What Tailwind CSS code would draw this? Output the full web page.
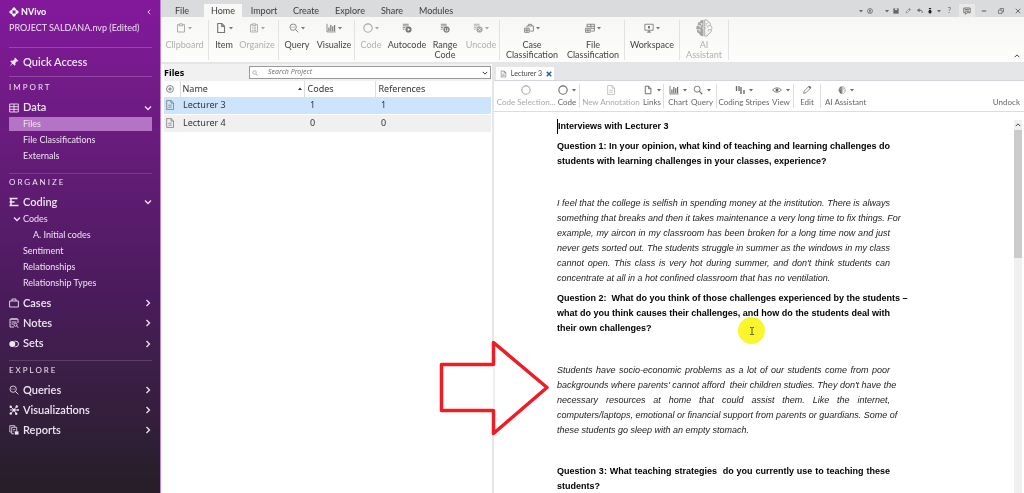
<!DOCTYPE html>
<html lang="en">
<head>
  <meta charset="UTF-8">
  <meta name="viewport" content="width=device-width, initial-scale=1.0">
  <title>NVivo - PROJECT SALDANA.nvp</title>
  <script src="https://cdn.jsdelivr.net/npm/@tailwindcss/browser@4"></script>
</head>
<body class="relative flex h-screen overflow-hidden bg-white font-['Lato',sans-serif] text-[#3c3c3c]">

  <!-- Icon sprite -->
  <svg class="hidden">
    <symbol id="i-right" viewBox="0 0 8 8"><path d="M2.5 1 5.5 4 2.5 7" fill="none" stroke="currentColor" stroke-width="1.3"/></symbol>
    <symbol id="i-down" viewBox="0 0 8 8"><path d="M1 2.5 4 5.5 7 2.5" fill="none" stroke="currentColor" stroke-width="1.3"/></symbol>
    <symbol id="i-caret" viewBox="0 0 4 4"><path d="M0 1h4L2 3.4z" fill="currentColor"/></symbol>
    <symbol id="i-circle" viewBox="0 0 12 12"><circle cx="6" cy="6" r="5" fill="none" stroke="currentColor" stroke-width="1.3"/></symbol>
    <symbol id="i-page" viewBox="0 0 12 12"><path d="M2.7 1.5h4.2l2.6 2.7v6.3H2.7zM6.7 1.5v2.9h2.8" fill="none" stroke="currentColor" stroke-width="1.1"/></symbol>
    <symbol id="i-doc" viewBox="0 0 12 12"><path d="M2 .7h5.400l2.800 2.800v7.800H2zM7.200.7v3h3M4 6.200h4M4 8.600h4" fill="none" stroke="currentColor" stroke-width=".8"/></symbol>
    <symbol id="i-search" viewBox="0 0 12 12"><circle cx="5" cy="5" r="3.6" fill="none" stroke="currentColor"/><path d="m7.7 7.7 3.4 3.4" stroke="currentColor" stroke-width="1.3"/></symbol>
    <symbol id="i-query" viewBox="0 0 12 12"><circle cx="5" cy="5" r="3.8" fill="none" stroke="currentColor"/><path d="m7.8 7.8 3.4 3.4M3 5h.8m.8 0h.8m.8 0H7" stroke="currentColor" stroke-width="1.1"/></symbol>
    <symbol id="i-chart" viewBox="0 0 12 12"><path d="M1.2 1v9.7H11.5" fill="none" stroke="currentColor"/><path d="M3.5 5.5v4M5.8 2.5v7M8.1 4v5.5M10.3 2.5v7" stroke="currentColor" stroke-width="1.4"/></symbol>
    <symbol id="i-clip" viewBox="0 0 12 12"><path d="M4 2H1.8v8.800h8.400V2H8M4 1h4v2.400H4z" fill="none" stroke="currentColor" stroke-width="1.1"/></symbol>
    <symbol id="i-list" viewBox="0 0 12 12"><path d="M4 2H1.8v8.800h8.400V2H8M4 1h4v2H4zM3.5 5h1M5.5 5h3M3.5 7h1M5.5 7h3M3.5 9h1M5.5 9h3" fill="none" stroke="currentColor"/></symbol>
    <symbol id="i-lines" viewBox="0 0 12 12"><path d="M1 1.5h7M1 3.5h7M1 5.5h3M1 7.5h2" stroke="currentColor"/><circle cx="7.8" cy="7.8" r="3.7" fill="currentColor"/></symbol>
    <symbol id="i-auto" viewBox="0 0 12 12"><use href="#i-lines"/><path d="m6.8 6 3 1.8-3 1.8z" fill="#fff"/></symbol>
    <symbol id="i-range" viewBox="0 0 12 12"><use href="#i-lines"/><path d="M6.5 6v3.5h2.8V6" fill="none" stroke="#fff" stroke-width=".9"/></symbol>
    <symbol id="i-uncode" viewBox="0 0 12 12"><use href="#i-lines"/><path d="m6.3 6.3 3 3m0-3-3 3" stroke="#fff" stroke-width=".9"/></symbol>
    <symbol id="i-caseclass" viewBox="0 0 12 12"><path d="M3.5 5V3.5h7.800v6.200H7.500M5.500 3.500V1.600h3.600v1.900" fill="none" stroke="currentColor"/><path d="M.7 6.200h5.600v5H.7zM.7 8.700h5.600M3.500 6.200v5" fill="none" stroke="currentColor"/></symbol>
    <symbol id="i-fileclass" viewBox="0 0 12 12"><path d="M2.500 5V1.500h8.800v8.200H7.500M2.500 4h8.800M7 1.500v4.200M7 6.500h4.300" fill="none" stroke="currentColor"/><path d="M.7 6.200h5.600v5H.7zM.7 8.700h5.600M3.500 6.200v5" fill="none" stroke="currentColor"/></symbol>
    <symbol id="i-screen" viewBox="0 0 12 12"><path d="M1 1.500h10v7.200H1zM3.500 11h5" fill="none" stroke="currentColor"/><path d="M4.800 3.600h2.400v3H4.800zM5.200 8.700h1.600V11H5.200z" fill="currentColor"/></symbol>
    <symbol id="i-pencil" viewBox="0 0 12 12"><path d="m2 10 .7-2.800L8.400 1.500l2.100 2.100-5.700 5.700z" fill="none" stroke="currentColor" stroke-width=".9"/><path d="m7.600 2.200 1.400-1.400 2.200 2.200-1.400 1.400z" fill="currentColor"/></symbol>
    <symbol id="i-brain" viewBox="0 0 18 18"><path d="M8.5 1C6.5.5 5 1.600 5 3 3 3 2.300 5 3 6.300 1 7 .7 9.500 2 10.800c-.5 2 .6 3.500 2.300 3.700C4.800 16.800 7 17.600 8.500 17z" fill="currentColor"/><path d="M9.700 1c2-.5 3.400.6 3.400 2 2 0 2.700 2 2 3.300 2 .7 2.300 3.200 1 4.500.5 2-.6 3.500-2.300 3.700-.4 2.300-2.600 3.100-4.100 2.500z" fill="none" stroke="currentColor" stroke-width=".9"/><path d="M12.500 4.500h-1.300v2.200M15 6.700h-2.200v2M16 10.700h-2.800v2M9.700 9h1.500" fill="none" stroke="currentColor" stroke-width=".7"/><path d="M5.500 4.500h1.300v2.200M3 6.700h2.200v2M2.500 10.700h2.500v2M8.500 9H7" fill="none" stroke="#fff" stroke-width=".8"/></symbol>
  </svg>

  <!-- Navigation -->
  <nav class="flex w-[161px] shrink-0 flex-col border-r border-[#c184cf] bg-linear-to-b from-[#84189c] via-[#4a1b5b] via-60% to-[#251e28] pr-2 pl-[9px] text-[#efe4f2]">
    <div class="flex h-5 items-center gap-0.5 pt-1">
      <svg class="size-2.5" viewBox="0 0 10 10"><path d="M5 0 10 5 5 10 0 5z" fill="#fff"/><path d="M5 3 7 5 5 7 3 5z" fill="#7d1994"/><path d="M1.500 1.500l2 2m3 3 2 2m0-7-2 2m-3 3-2 2" stroke="#7d1994" stroke-width=".7"/></svg>
      <span class="flex-1 text-[9px] font-bold text-white">NVivo</span>
      <button aria-label="Collapse" class="rotate-180"><svg class="size-1.5"><use href="#i-right"/></svg></button>
    </div>
    <div class="h-[27px] text-[9px] leading-4 whitespace-nowrap">PROJECT SALDANA.nvp (Edited)</div>
    <a href="#" class="flex h-[30px] items-center gap-1 border-y border-white/20 text-[11px] font-semibold">
      <svg class="size-2.5" viewBox="0 0 10 10"><path d="M6 .5 9.500 4 8.400 4.500 8 4.300 6.300 6l.2 1.800-.9.9-2-2L.3 9.800 3 6 1.200 4.300l.9-.8 1.900.2L5.700 2l-.3-.5z" fill="currentColor"/></svg>
      Quick Access
    </a>

    <h2 class="h-[21px] text-[8px] leading-5 tracking-[2px]">IMPORT</h2>
    <a href="#" class="flex h-[19px] items-center gap-1 text-[11px] font-semibold">
      <svg class="size-2.5" viewBox="0 0 10 10"><path d="M.7 1h8.600v8H.7zM.7 3.700h8.600M.7 6.300h8.600M5 1v8" fill="none" stroke="currentColor" stroke-width=".9"/></svg>
      <span class="flex-1">Data</span><svg class="size-2"><use href="#i-down"/></svg>
    </a>
    <a href="#" class="h-[14px] bg-[#b473c4] pl-3.5 text-[9px] leading-[14px]">Files</a>
    <a href="#" class="mt-px h-4 pl-3.5 text-[9px] leading-4">File Classifications</a>
    <a href="#" class="h-[26px] border-b border-white/15 pl-3.5 text-[9px] leading-4">Externals</a>

    <h2 class="h-[19px] text-[8px] leading-4 tracking-[2px]">ORGANIZE</h2>
    <a href="#" class="flex h-[18px] items-center gap-1 text-[11px] font-semibold">
      <svg class="size-2.5" viewBox="0 0 10 10"><path d="M.5 1.500h8M.5 5h5M.5 8.500h9M2 1.500v7" stroke="currentColor" stroke-width="1.600"/></svg>
      <span class="flex-1">Coding</span><svg class="size-2"><use href="#i-down"/></svg>
    </a>
    <a href="#" class="flex h-4 items-center gap-0.5 pl-1 text-[9px] leading-4"><svg class="size-2"><use href="#i-down"/></svg>Codes</a>
    <a href="#" class="h-4 pl-6 text-[9px] leading-4">A. Initial codes</a>
    <a href="#" class="h-4 pl-3.5 text-[9px] leading-4">Sentiment</a>
    <a href="#" class="h-4 pl-3.5 text-[9px] leading-4">Relationships</a>
    <a href="#" class="mb-0.5 h-4 pl-3.5 text-[9px] leading-4">Relationship Types</a>
    <a href="#" class="flex h-5 items-center gap-1 text-[11px] font-semibold">
      <svg class="size-2.5" viewBox="0 0 10 10"><path d="M.6 3h8.800v6H.6zM3 3V1h4v2" fill="none" stroke="currentColor" stroke-width=".9"/></svg>
      <span class="flex-1">Cases</span><svg class="size-2"><use href="#i-right"/></svg>
    </a>
    <a href="#" class="flex h-5 items-center gap-1 text-[11px] font-semibold">
      <svg class="size-2.5" viewBox="0 0 10 10"><path d="M5 9H1V1h8v4M3 0v2M5 0v2M7 0v2M2.500 4h5M2.500 6h2M7.500 8l2 1.700" fill="none" stroke="currentColor" stroke-width=".9"/><circle cx="6.500" cy="6.800" r="1.500" fill="none" stroke="currentColor" stroke-width=".8"/></svg>
      <span class="flex-1">Notes</span><svg class="size-2"><use href="#i-right"/></svg>
    </a>
    <a href="#" class="flex h-[21px] items-center gap-1 text-[11px] font-semibold">
      <svg class="size-2.5" viewBox="0 0 10 10"><circle cx="3.300" cy="5" r="3" fill="currentColor"/><path d="M5.500 2.200h1.200a2.800 2.800 0 0 1 0 5.600H5.500" fill="none" stroke="currentColor"/></svg>
      <span class="flex-1">Sets</span><svg class="size-2"><use href="#i-right"/></svg>
    </a>

    <h2 class="mt-1.5 h-5 border-t border-white/15 text-[8px] leading-[18px] tracking-[2px]">EXPLORE</h2>
    <a href="#" class="flex h-5 items-center gap-1 text-[11px] font-semibold">
      <svg class="size-2.5"><use href="#i-query"/></svg>
      <span class="flex-1">Queries</span><svg class="size-2"><use href="#i-right"/></svg>
    </a>
    <a href="#" class="flex h-5 items-center gap-1 text-[11px] font-semibold">
      <svg class="size-2.5" viewBox="0 0 10 10"><path d="M5 5 1.500 1.500M5 5l3-4M5 5l3.500 0M5 5 2 8.500M5 5l2 3.500M5 5H1" stroke="currentColor" stroke-width=".9"/><g fill="currentColor"><circle cx="5" cy="5" r="1.500"/><circle cx="1.700" cy="1.700" r="1.200"/><circle cx="7.800" cy="1.500" r="1.200"/><circle cx="9" cy="5" r="1"/><circle cx="1.800" cy="8.500" r="1.200"/><circle cx="7.200" cy="8.700" r="1.200"/></g></svg>
      <span class="flex-1">Visualizations</span><svg class="size-2"><use href="#i-right"/></svg>
    </a>
    <a href="#" class="flex h-5 items-center gap-1 text-[11px] font-semibold">
      <svg class="size-2.5" viewBox="0 0 10 10"><path d="M2.500 7H.8V.7h5V2M2.700 2.300h5v4M2.700 2.300v6.500H5M4.200 4.500h2M4.200 6h1" fill="none" stroke="currentColor" stroke-width=".8"/><path d="M5.800 6.300h3.700v3.300H5.800z" fill="currentColor"/></svg>
      <span class="flex-1">Reports</span><svg class="size-2"><use href="#i-right"/></svg>
    </a>
  </nav>

  <div class="flex min-w-0 flex-1 flex-col">
    <!-- Title bar and tabs -->
    <header class="flex h-[17px] shrink-0 items-end bg-[#d9dbdd] text-[9px] leading-[13px]">
      <button class="mr-[7px] w-9 pl-1.5">File</button>
      <button class="h-[13px] w-[38px] bg-[#f8f8f7]">Home</button>
      <button class="w-11">Import</button>
      <button class="w-10">Create</button>
      <button class="w-12">Explore</button>
      <button class="w-9">Share</button>
      <button class="w-[52px]">Modules</button>
      <div class="ml-auto flex h-full items-center pt-1 text-[#666]">
        <svg class="mr-1 size-1"><use href="#i-caret"/></svg>
        <button aria-label="Account" class="mr-3"><svg class="size-1.5" viewBox="0 0 8 8"><circle cx="4" cy="4" r="3.300" fill="none" stroke="currentColor"/><circle cx="4" cy="3.300" r="1.200" fill="currentColor"/><path d="M2 6.300c1-1.500 3-1.500 4 0" fill="none" stroke="currentColor"/></svg></button>
        <svg class="mr-1 size-1"><use href="#i-caret"/></svg>
        <button aria-label="Save" class="mr-1.5"><svg class="size-1.5" viewBox="0 0 8 8"><path d="M.5.5h7v7h-7z" fill="currentColor"/><path d="M2.500.5h3v2.300h-3z" fill="#d9dbdd"/></svg></button>
        <button aria-label="Edit" class="mr-1.5"><svg class="size-1.5"><use href="#i-pencil"/></svg></button>
        <button aria-label="Undo" class="mr-1"><svg class="size-1.5" viewBox="0 0 8 8"><path d="M1 3h4.500Q7.300 4 7 6.500" fill="none" stroke="currentColor" stroke-width="1.300"/><path d="M3.500.3v5.400L0 3z" fill="currentColor"/></svg></button>
        <button aria-label="More" class="mr-1 text-[#222]"><svg class="size-1.5" viewBox="0 0 8 8"><path d="M2.500 0h3v1.500h-3zM2.500 2.500h3v2h1.500L4 8 1 4.500h1.500z" fill="currentColor"/></svg></button>
        <svg class="mr-1.5 size-1"><use href="#i-caret"/></svg>
        <button class="mr-2 text-[8px]">?</button>
        <button aria-label="Feedback" class="mr-1.5 flex h-[13px] w-4 items-center justify-center bg-[#e8e8e7]"><svg class="size-2" viewBox="0 0 8 8"><path d="M.8 1h6.400v4.700H4L2.500 7.300V5.700H.8zM2 2.600h4M2 4.200h4" fill="none" stroke="currentColor" stroke-width=".9"/></svg></button>
        <button aria-label="Minimize" class="mr-[11px]"><svg class="size-1.5" viewBox="0 0 8 8"><path d="M1 4h6" stroke="currentColor" stroke-width="1.500"/></svg></button>
        <button aria-label="Restore" class="mr-[11px]"><svg class="size-1.5" viewBox="0 0 8 8"><path d="M.7 2.700h4.600v4.600H.7zM2.700 2.500V.7h4.600v4.600H5.500" fill="none" stroke="currentColor"/></svg></button>
        <button aria-label="Close" class="mr-[3px]"><svg class="size-1.5" viewBox="0 0 8 8"><path d="m1 1 6 6m0-6L1 7" stroke="currentColor" stroke-width="1.300"/></svg></button>
      </div>
    </header>

    <!-- Ribbon -->
    <div class="flex h-[45px] shrink-0 bg-linear-to-b from-[#f7f7f6] to-[#fdfdfc] pt-[3px] pb-0.5 text-[9px] leading-[10px] text-[#444] [&_button]:flex [&_button]:flex-col [&_button]:items-center [&_button]:gap-1 [&_button>span:first-child]:flex [&_button>span:first-child]:h-4 [&_button>span:first-child]:items-center [&_button>span:first-child]:gap-0.5 [&_button>span:first-child]:text-[#777] [&_button:disabled]:text-[#b0b0b0] [&_button:disabled>span:first-child]:text-[#a5a5a5]">
      <div class="flex w-12 justify-center border-r border-[#e2e2e4]">
        <button disabled><span><svg class="size-2.5"><use href="#i-clip"/></svg><svg class="size-1"><use href="#i-caret"/></svg></span>Clipboard</button>
      </div>
      <div class="flex w-[70px] border-r border-[#e2e2e4]">
        <button class="w-[30px]"><span><svg class="size-3"><use href="#i-page"/></svg><svg class="size-1"><use href="#i-caret"/></svg></span>Item</button>
        <button class="w-9" disabled><span><svg class="size-2.5"><use href="#i-list"/></svg><svg class="size-1"><use href="#i-caret"/></svg></span>Organize</button>
      </div>
      <div class="flex w-[76px] border-r border-[#e2e2e4]">
        <button class="w-9"><span><svg class="size-2.5"><use href="#i-query"/></svg><svg class="size-1"><use href="#i-caret"/></svg></span>Query</button>
        <button class="w-[38px]"><span><svg class="size-2.5"><use href="#i-chart"/></svg><svg class="size-1"><use href="#i-caret"/></svg></span>Visualize</button>
      </div>
      <div class="flex w-[145px] border-r border-[#e2e2e4]">
        <button class="w-8" disabled><span><svg class="size-2.5"><use href="#i-circle"/></svg><svg class="size-1"><use href="#i-caret"/></svg></span>Code</button>
        <button class="w-10"><span><svg class="size-2.5"><use href="#i-auto"/></svg></span>Autocode</button>
        <button class="w-9"><span><svg class="size-2.5"><use href="#i-range"/></svg></span><span>Range<br>Code</span></button>
        <button class="w-9" disabled><span><svg class="size-2.5"><use href="#i-uncode"/></svg><svg class="size-1"><use href="#i-caret"/></svg></span>Uncode</button>
      </div>
      <div class="flex w-[125px] border-r border-[#e2e2e4]">
        <button class="w-16"><span><svg class="size-2.5"><use href="#i-caseclass"/></svg><svg class="size-1"><use href="#i-caret"/></svg></span><span>Case<br>Classification</span></button>
        <button class="w-[58px]"><span><svg class="size-2.5"><use href="#i-fileclass"/></svg><svg class="size-1"><use href="#i-caret"/></svg></span><span>File<br>Classification</span></button>
      </div>
      <div class="flex w-[55px] justify-center border-r border-[#e2e2e4]">
        <button><span><svg class="size-2.5"><use href="#i-screen"/></svg><svg class="size-1"><use href="#i-caret"/></svg></span>Workspace</button>
      </div>
      <div class="flex w-[49px] justify-center border-r border-[#e2e2e4]">
        <button disabled><span><svg class="size-[18px]"><use href="#i-brain"/></svg></span><span>AI<br>Assistant</span></button>
      </div>
      <button aria-label="Collapse ribbon" class="mr-1 ml-auto justify-end pb-px"><svg class="size-1.5 rotate-180"><use href="#i-down"/></svg></button>
    </div>

    <main class="flex min-h-0 flex-1 border-t-2 border-[#e4e5e8]">
      <!-- File list -->
      <section class="w-[331px] shrink-0 pr-px pl-[3px] font-['Noto_Sans',sans-serif] text-[9px]">
        <div class="flex h-[17px] items-center bg-[#f1f1f1]">
          <h1 class="w-[85px] font-bold text-black">Files</h1>
          <label class="flex h-[13px] flex-1 items-center border border-[#999] bg-white px-0.5 text-[#777]">
            <svg class="mr-2.5 size-1.5"><use href="#i-search"/></svg>
            <input type="text" aria-label="Search Project" placeholder="Search Project" class="min-w-0 flex-1 text-[7px] italic outline-none placeholder:text-[#777]">
            <svg class="size-1.5 text-[#333]"><use href="#i-down"/></svg>
          </label>
        </div>
        <table class="w-full table-fixed text-left leading-3 text-[#333]">
          <thead>
            <tr class="h-4">
              <th class="w-4 pl-0.5"><svg class="size-2" viewBox="0 0 10 10"><circle cx="5" cy="5" r="4.300" fill="none" stroke="#555" stroke-width=".9"/><path d="M5 2.800v4.400M2.800 5h4.400" stroke="#555"/></svg></th>
              <th class="w-[124px] border-l border-[#ddd] pl-0.5 font-normal"><div class="flex items-center justify-between pr-0.5">Name<svg class="size-1 rotate-180"><use href="#i-caret"/></svg></div></th>
              <th class="w-[71px] border-l border-[#ddd] pl-[3px] font-normal">Codes</th>
              <th class="border-l border-[#ddd] pl-[3px] font-normal">References</th>
            </tr>
          </thead>
          <tbody>
            <tr class="h-[17px] bg-[#cde5fc]">
              <td class="pl-px"><svg class="size-2.5 text-[#666]"><use href="#i-doc"/></svg></td>
              <td class="pl-[3px]">Lecturer 3</td><td class="pl-1.5">1</td><td class="pl-1.5">1</td>
            </tr>
            <tr class="h-[18px] border-t border-white bg-[#f0f0f0]">
              <td class="pl-px"><svg class="size-2.5 text-[#666]"><use href="#i-doc"/></svg></td>
              <td class="pl-[3px]">Lecturer 4</td><td class="pl-1.5">0</td><td class="pl-1.5">0</td>
            </tr>
          </tbody>
        </table>
      </section>

      <!-- Document -->
      <section class="flex min-w-0 flex-1 flex-col border-l-2 border-[#e6e6e8]">
        <div class="flex h-[17px] shrink-0 items-end border-b border-[#d2d5d9] bg-[#e4e6e8] pl-0.5">
          <div class="flex h-[13px] w-[58px] items-center gap-1 bg-white pl-1 text-[7px] text-[#444]">
            <svg class="size-2.5"><use href="#i-doc"/></svg>
            <span class="flex-1 whitespace-nowrap">Lecturer 3</span>
            <button aria-label="Close tab" class="pr-0.5 text-[#1f5f9c]"><svg class="size-1.5" viewBox="0 0 8 8"><path d="m1 1 6 6m0-6L1 7" stroke="currentColor" stroke-width="1.900"/></svg></button>
          </div>
        </div>
        <div class="flex h-[31px] shrink-0 items-center border-b border-[#ddd] pr-1 pl-px text-[8px] whitespace-nowrap text-[#666] [&_button]:flex [&_button]:flex-col [&_button]:items-center [&_button]:leading-3 [&_button>span]:flex [&_button>span]:h-3 [&_button>span]:items-center [&_button>span]:gap-1 [&_button:disabled]:text-[#aaa]">
          <div class="flex h-6 w-[85px] border-r border-[#ddd]">
            <button class="w-[62px]" disabled><span><svg class="size-2.5"><use href="#i-circle"/></svg></span>Code Selection...</button>
            <button class="w-5"><span><svg class="size-2.5"><use href="#i-circle"/></svg><svg class="size-1"><use href="#i-caret"/></svg></span>Code</button>
          </div>
          <div class="flex h-6 w-[84px] border-r border-[#ddd]">
            <button class="w-[62px]" disabled><span><svg class="size-2.5"><use href="#i-doc"/></svg></span>New Annotation</button>
            <button class="w-5"><span><svg class="size-2.5"><use href="#i-page"/></svg><svg class="size-1"><use href="#i-caret"/></svg></span>Links</button>
          </div>
          <div class="flex h-6 w-[53px] border-r border-[#ddd] pl-0.5">
            <button class="w-6"><span><svg class="size-2.5"><use href="#i-chart"/></svg><svg class="size-1"><use href="#i-caret"/></svg></span>Chart</button>
            <button class="w-6"><span><svg class="size-2.5"><use href="#i-search"/></svg><svg class="size-1"><use href="#i-caret"/></svg></span>Query</button>
          </div>
          <div class="flex h-6 w-[77px] border-r border-[#ddd]">
            <button class="w-[54px]"><span><svg class="size-2.5" viewBox="0 0 10 10"><path d="M1.500 1v5M4 1v5M6 2v7M9 5v4" stroke="currentColor" stroke-width="1.300"/></svg><svg class="size-1"><use href="#i-caret"/></svg></span>Coding Stripes</button>
            <button class="w-5"><span><svg class="size-2.5" viewBox="0 0 10 10"><path d="M.5 5Q5 .5 9.500 5 5 9.500.5 5z" fill="none" stroke="currentColor" stroke-width=".8"/><circle cx="5" cy="5" r="1.500" fill="currentColor"/></svg><svg class="size-1"><use href="#i-caret"/></svg></span>View</button>
          </div>
          <div class="flex h-6 w-[27px] justify-center border-r border-[#ddd]">
            <button><span><svg class="size-2.5"><use href="#i-pencil"/></svg></span>Edit</button>
          </div>
          <div class="flex h-6 pl-1">
            <button><span><svg class="size-2"><use href="#i-brain"/></svg><svg class="size-1"><use href="#i-caret"/></svg></span>AI Assistant</button>
          </div>
          <button class="ml-auto h-6 justify-end">Undock</button>
        </div>

        <div class="flex min-h-0 flex-1">
          <article class="min-w-0 flex-1 overflow-hidden pt-[7px] pl-[63px] font-['Liberation_Sans',sans-serif] text-[9px] leading-[15px] text-[#222]">
            <!-- Lines break as typed; the last line of each block stays ragged -->
            <div class="w-[333px] text-justify whitespace-nowrap [text-align-last:justify] [&_h3]:mb-[5px] [&_h3]:font-bold [&_h3]:text-black [&_p]:mb-[5px] [&_p]:italic [&_span]:block [&_span]:[text-align-last:left]">
              <h3><span class="border-l border-black">Interviews with Lecturer 3</span></h3>
              <h3>Question 1: In your opinion, what kind of teaching and learning challenges do
                <span>students with learning challenges in your classes, experience?</span></h3>
              <p class="pt-[22px]">I feel that the college is selfish in spending money at the institution. There is always<br>
                something that breaks and then it takes maintenance a very long time to fix things. For<br>
                example, my aircon in my classroom has been broken for a long time now and just<br>
                never gets sorted out. The students struggle in summer as the windows in my class<br>
                cannot open. This class is very hot during summer, and don't think students can
                <span>concentrate at all in a hot confined classroom that has no ventilation.</span></p>
              <h3>Question 2: &nbsp;What do you think of those challenges experienced by the students –<br>
                what do you think causes their challenges, and how do the students deal with
                <span>their own challenges?</span></h3>
              <p class="pt-[22px]">Students have socio-economic problems as a lot of our students come from poor<br>
                backgrounds where parents' cannot afford &nbsp;their children studies. They don't have the<br>
                necessary resources at home that could assist them. Like the internet,<br>
                computers/laptops, emotional or financial support from parents or guardians. Some of
                <span>these students go sleep with an empty stomach.</span></p>
              <h3 class="pt-[21px]">Question 3: What teaching strategies &nbsp;do you currently use to teaching these
                <span>students?</span></h3>
            </div>
          </article>
          <div class="mt-2 mr-0.5 w-2 bg-[#f0f0f0] text-[#444]">
            <button aria-label="Scroll up" class="flex h-2.5 w-2 items-center justify-center"><svg class="size-1.5 rotate-180"><use href="#i-down"/></svg></button>
            <div class="h-32 bg-[#cbcbcb]"></div>
          </div>
        </div>
      </section>
    </main>
  </div>

  <!-- Arrow callout over both panes -->
  <svg class="absolute top-[338px] left-[439px] h-[98px] w-[110px]" viewBox="0 0 110 98"><path d="M2.500 26.500H54.500V4.500L108 49.500 54.500 95.500V72.500H2.500z" fill="#fff" stroke="#ee1c25" stroke-width="3.500" stroke-linejoin="round"/><path d="M55 28v43" stroke="#eee" stroke-width="2"/></svg>

  <!-- Highlighted mouse pointer -->
  <div class="absolute top-[317px] left-[738px] flex size-[27px] items-center justify-center rounded-full bg-[#fbf52c] mix-blend-multiply">
    <svg class="h-2 w-1.5" viewBox="0 0 6 8"><path d="M1 .5h1.500L3 1l.5-.5H5M3 1v6M1 7.500h1.500L3 7l.5.5H5" fill="none" stroke="#444" stroke-width=".9"/></svg>
  </div>
</body>
</html>
